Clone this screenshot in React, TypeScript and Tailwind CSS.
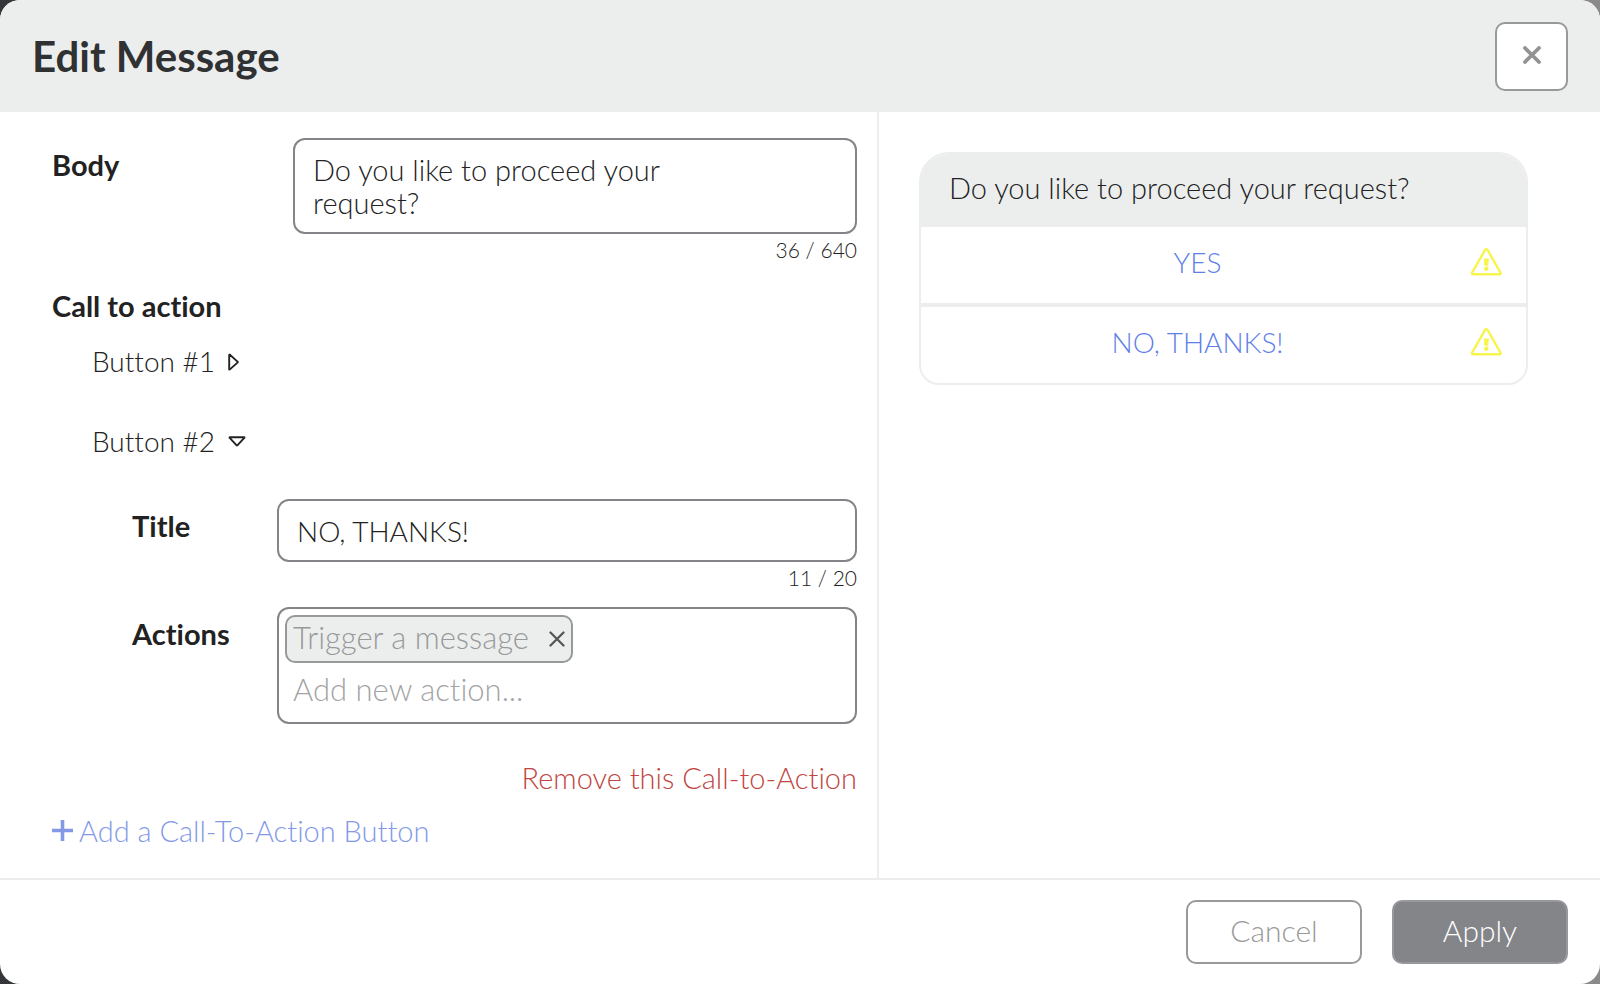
import { useState } from "react";

function WarningIcon() {
  return (
    <svg viewBox="0 0 32 30" className="h-[30px] w-8 shrink-0" role="img" aria-label="Warning">
      <path
        d="M15.2 2.7a1.3 1.3 0 0 1 2.2 0l13.2 23.1a1 1 0 0 1-.9 1.4H2.9a1 1 0 0 1-.9-1.4z"
        fill="none"
        stroke="#f8f44e"
        strokeWidth="2.4"
        strokeLinejoin="round"
      />
      <path d="M13.8 11.4h5l-.5 7.4h-4z" fill="#f8f44e" />
      <circle cx="16.3" cy="21.8" r="2.3" fill="#f8f44e" />
    </svg>
  );
}

function RightTriangle() {
  return (
    <svg viewBox="0 0 18 18" className="h-[18px] w-[18px]" aria-hidden="true">
      <path d="M1.2 2v14.2q0 .8.7.2l7.6-6.8q.6-.5 0-1L1.9 1.8q-.7-.6-.7.2z" fill="none" stroke="#222" strokeWidth="1.9" strokeLinejoin="round" />
    </svg>
  );
}

function DownTriangle() {
  return (
    <svg viewBox="0 0 18 18" className="h-[18px] w-[18px]" aria-hidden="true">
      <path d="M2 4.2h14q.9 0 .3.7l-6.7 7.3q-.6.6-1.2 0L1.7 4.9q-.6-.7.3-.7z" fill="none" stroke="#222" strokeWidth="1.9" strokeLinejoin="round" />
    </svg>
  );
}

const field =
  "block w-full resize-none overflow-hidden rounded-xl border-2 border-[#848589] bg-white px-[18px] outline-none";

export default function App() {
  const [body, setBody] = useState("Do you like to proceed your request?");
  const [title, setTitle] = useState("NO, THANKS!");
  return (
    <div className="min-h-screen bg-linear-to-r from-[#34363a] to-[#8a8a8a] font-[Lato,sans-serif] text-[29px] leading-[33px] font-light text-[#222] [font-variant-ligatures:none]">
      <main className="flex min-h-screen flex-col overflow-hidden rounded-[20px] bg-white">
        <header className="flex h-28 items-center justify-between bg-[#eceeed] px-8">
          <h1 className="text-[42px] leading-[48px] font-bold text-[#303133]">Edit Message</h1>
          <button type="button" aria-label="Close" className="flex h-[69px] w-[73px] items-center justify-center rounded-[10px] border-2 border-[#98999b] bg-white pb-[2px]">
            <svg viewBox="0 0 18 18" className="h-[18px] w-[18px]" aria-hidden="true">
              <path d="M2 2l14 14M16 2L2 16" stroke="#929395" strokeWidth="3.8" strokeLinecap="round" />
            </svg>
          </button>
        </header>

        <div className="grid flex-1 grid-cols-[879fr_721fr]">
          <form className="flex flex-col border-r-2 border-[#eceeed] pt-[26px] pr-5 pl-[52px]">
            <div className="flex">
              <label htmlFor="body" className="w-[241px] shrink-0 pt-[10px] font-bold">Body</label>
              <div className="flex-1">
                <textarea id="body" rows={2} value={body} onChange={(e) => setBody(e.target.value)} className={`${field} h-24 pt-[13px] pr-24`} />
                <p className="pt-[2px] text-right text-[21px] leading-[28px]">{body.length} / 640</p>
              </div>
            </div>

            <h2 className="pt-[25px] font-bold">Call to action</h2>
            <button type="button" aria-expanded="false" className="mt-[23px] ml-10 flex items-center gap-[13px] self-start text-[28px]">
              Button #1 <RightTriangle />
            </button>
            <button type="button" aria-expanded="true" className="mt-[47px] ml-10 flex items-center gap-[13px] self-start text-[28px]">
              Button #2 <DownTriangle />
            </button>

            <div className="flex pt-[41px] pl-20">
              <label htmlFor="title" className="w-[145px] shrink-0 pt-[10px] font-bold">Title</label>
              <div className="flex-1">
                <input id="title" type="text" value={title} onChange={(e) => setTitle(e.target.value)} className={`${field} h-[63px] text-[28px]`} />
                <p className="pt-[2px] text-right text-[21px] leading-[28px]">{title.length} / 20</p>
              </div>
            </div>

            <div className="flex pt-[15px] pl-20">
              <label htmlFor="action" className="w-[145px] shrink-0 pt-[10px] font-bold">Actions</label>
              <div className="h-[117px] flex-1 rounded-xl border-2 border-[#848589] p-[6px] text-[31px] text-[#98999b]">
                <div className="flex h-12 w-[288px] items-center justify-between rounded-[10px] border-2 border-[#98999b] bg-[#eceeed] px-[6px]">
                  <span className="pb-1">Trigger a message</span>
                  <button type="button" aria-label="Remove Trigger a message">
                    <svg viewBox="0 0 16 16" className="h-4 w-4" aria-hidden="true">
                      <path d="M1.5 1.5l13 13M14.5 1.5l-13 13" stroke="#555658" strokeWidth="2.3" strokeLinecap="round" />
                    </svg>
                  </button>
                </div>
                <input id="action" type="text" placeholder="Add new action..." className="mt-[6px] block h-10 w-full bg-transparent px-2 outline-none placeholder:text-[#a3a4a6]" />
              </div>
            </div>

            <button type="button" className="mt-[37px] self-end text-[#c14542]">Remove this Call-to-Action</button>
            <button type="button" className="mt-5 mb-7 flex items-center gap-[6px] self-start text-[#8399e8]">
              <svg viewBox="0 0 21 21" className="h-[21px] w-[21px]" aria-hidden="true">
                <path d="M0 10.5h21M10.5 0v21" stroke="#8399e8" strokeWidth="3.6" />
              </svg>
              Add a Call-To-Action Button
            </button>
          </form>

          <section aria-label="Preview" className="px-10 pt-10 pr-[72px]">
            <div className="overflow-hidden rounded-t-[30px] rounded-b-[20px] border-2 border-[#eceeed]">
              <p className="h-[73px] bg-[#eceeed] px-7 pt-[17px]">{body}</p>
              <div className="flex h-20 items-center border-b-4 border-[#eceeed] pr-6 pb-[6px] pl-1 text-[28px] text-[#5f7fe8]">
                <a href="#yes" className="flex-1 text-center">YES</a>
                <WarningIcon />
              </div>
              <div className="flex h-[76px] items-center pr-6 pb-[6px] pl-1 text-[28px] text-[#5f7fe8]">
                <a href="#no" className="flex-1 text-center">{title}</a>
                <WarningIcon />
              </div>
            </div>
          </section>
        </div>

        <footer className="flex justify-end gap-[30px] border-t-2 border-[#eceeed] px-8 py-5 text-[30px]">
          <button type="button" className="h-16 w-44 rounded-[10px] border-2 border-[#98999b] pb-1 text-[#98999b]">Cancel</button>
          <button type="button" className="h-16 w-44 rounded-[10px] border-2 border-[#98999b] bg-[#848589] pb-1 text-white">Apply</button>
        </footer>
      </main>
    </div>
  );
}
